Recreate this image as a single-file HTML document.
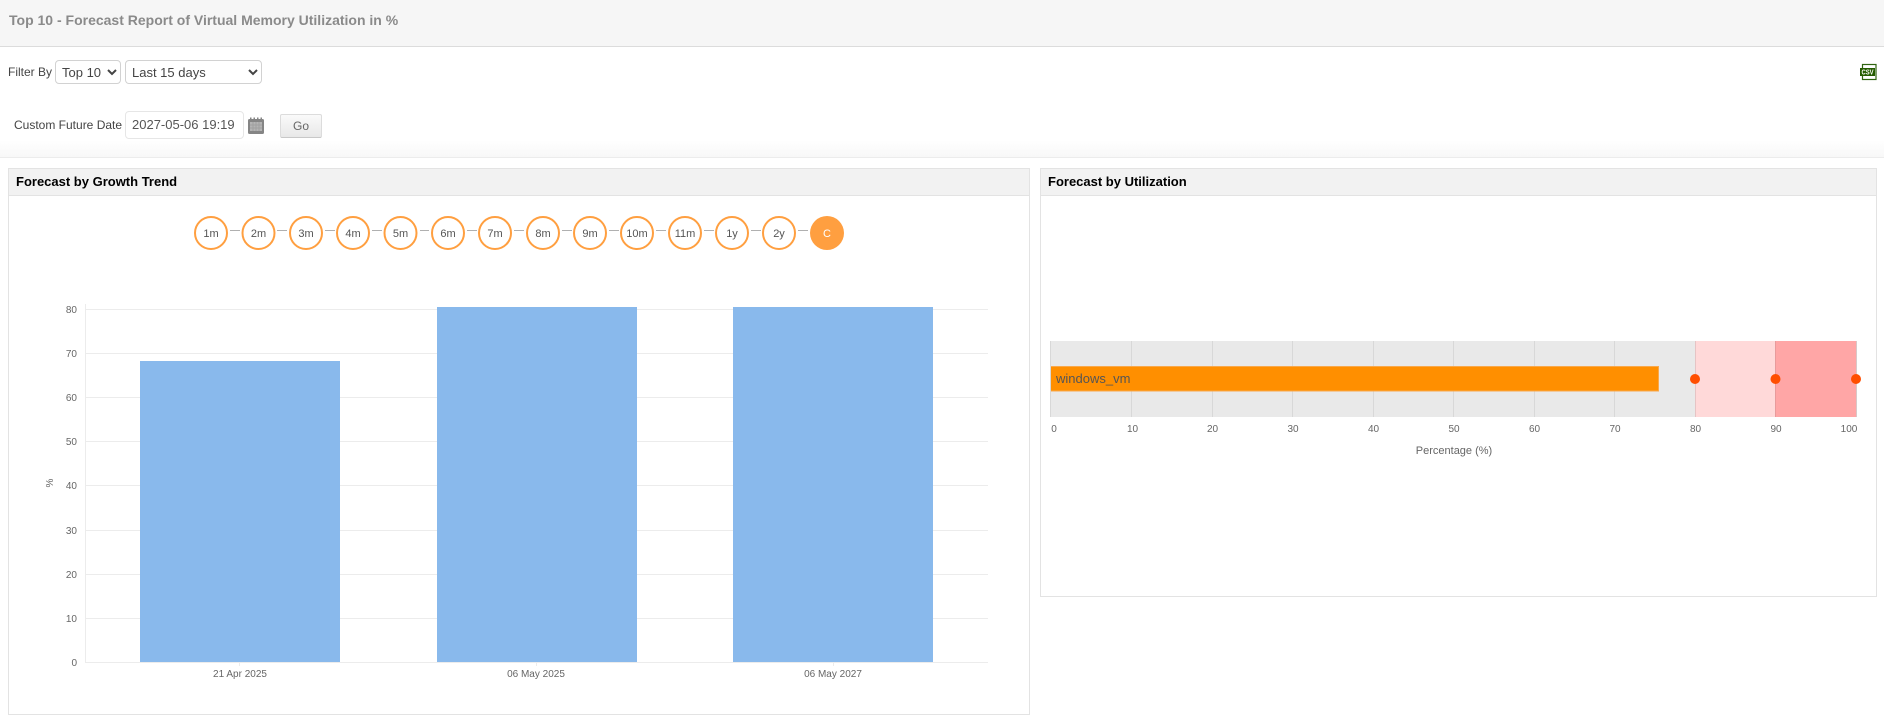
<!DOCTYPE html>
<html lang="en">
<head>
<meta charset="utf-8">
<title>Forecast Report</title>
<style>
html,body{margin:0;padding:0;background:#fff;width:1884px;height:715px;overflow:hidden;font-family:"Liberation Sans",Arial,sans-serif;color:#444}
.abs{position:absolute;white-space:nowrap}
#top{position:absolute;left:0;top:0;width:1884px;height:46px;background:#f6f6f6;border-bottom:1px solid #dcdcdc}
#title{left:9px;top:12px;font-size:14px;line-height:16px;font-weight:bold;color:#8a8a8a}
#fade{position:absolute;left:0;top:140px;width:1884px;height:17px;background:linear-gradient(#fff,#f8f8f8);border-bottom:1px solid #ececec}
select{position:absolute;box-sizing:border-box;background:#fff;border:1px solid #d2d2d2;border-radius:4px;font-family:"Liberation Sans",Arial,sans-serif;font-size:13px;color:#444;padding:0 0 0 2px;margin:0;height:24px}
#date{left:125px;top:111px;width:119px;height:28px;box-sizing:border-box;border:1px solid #e6e6e6;border-radius:4px;background:#fff;font-size:13px;line-height:26px;padding-left:6px;color:#555}
#go{left:280px;top:114px;width:42px;height:24px;box-sizing:border-box;border:1px solid #dcdcdc;border-bottom-color:#c8c8c8;border-radius:2px;background:linear-gradient(#fafafa,#e8e8e8);font-size:12px;line-height:23px;text-align:center;color:#666}
.panel{position:absolute;box-sizing:border-box;border:1px solid #e3e3e3;background:#fff}
.phead{position:absolute;left:0;top:0;right:0;height:26px;background:#f2f2f2;border-bottom:1px solid #e3e3e3;font-size:13px;font-weight:bold;line-height:25px;color:#000;padding-left:7px}
svg{position:absolute;left:0;top:0}
svg text{font-family:"Liberation Sans",Arial,sans-serif}
</style>
</head>
<body>
<div id="top"></div>
<div id="title" class="abs">Top 10 - Forecast Report of Virtual Memory Utilization in %</div>
<div id="fade"></div>

<div class="abs" style="left:8px;top:65px;font-size:12px;line-height:14px;color:#444">Filter By</div>
<select style="left:55px;top:60px;width:66px"><option>Top 10</option></select>
<select style="left:125px;top:60px;width:137px"><option>Last 15 days</option></select>

<div class="abs" style="left:14px;top:118px;font-size:12px;line-height:14px;color:#444">Custom Future Date</div>
<div id="date" class="abs">2027-05-06 19:19</div>
<svg width="1884" height="715" style="pointer-events:none;z-index:1">
  <!-- calendar -->
  <rect x="248" y="119" width="16" height="15" rx="1.5" fill="#858585"/>
  <rect x="250" y="117.5" width="1.5" height="3" fill="#858585"/>
  <rect x="253.5" y="117.5" width="1.5" height="3" fill="#858585"/>
  <rect x="257" y="117.5" width="1.5" height="3" fill="#858585"/>
  <rect x="260.5" y="117.5" width="1.5" height="3" fill="#858585"/>
  <rect x="250" y="122" width="12" height="9" fill="#b4b4b4"/>
  <path d="M253 122v9M256 122v9M259 122v9M250 125h12M250 128h12" stroke="#a0a0a0" stroke-width="1" fill="none"/>
  <!-- csv icon -->
  <rect x="1862.5" y="64.5" width="13.5" height="15" fill="#fff" stroke="#2f6410" stroke-width="1.2"/>
  <rect x="1860" y="68" width="15" height="8" fill="#255c00"/>
  <text x="1867.5" y="74.7" font-size="7" font-weight="bold" fill="#fff" text-anchor="middle" textLength="12" lengthAdjust="spacingAndGlyphs">CSV</text>
</svg>
<div id="go" class="abs">Go</div>

<div class="panel" style="left:8px;top:168px;width:1022px;height:547px"><div class="phead">Forecast by Growth Trend</div></div>
<div class="panel" style="left:1040px;top:168px;width:837px;height:429px"><div class="phead">Forecast by Utilization</div></div>

<svg width="1884" height="715" style="z-index:2">
  <!-- timeline connectors -->
  <g stroke="#b0b0b0" stroke-width="1">
    <path d="M230 230.5h10M277 230.5h10M325 230.5h10M372 230.5h10M420 230.5h9M467 230.5h10M514 230.5h10M562 230.5h10M609 230.5h10M656 230.5h10M704 230.5h10M751 230.5h10M798 230.5h10"/>
  </g>
  <g fill="#fff" stroke="#ff9f40" stroke-width="2">
    <circle cx="211" cy="233" r="16"/><circle cx="258.5" cy="233" r="16"/><circle cx="306" cy="233" r="16"/><circle cx="353" cy="233" r="16"/><circle cx="400.5" cy="233" r="16"/><circle cx="448" cy="233" r="16"/><circle cx="495" cy="233" r="16"/><circle cx="543" cy="233" r="16"/><circle cx="590" cy="233" r="16"/><circle cx="637" cy="233" r="16"/><circle cx="685" cy="233" r="16"/><circle cx="732" cy="233" r="16"/><circle cx="779" cy="233" r="16"/>
  </g>
  <circle cx="827" cy="233" r="17" fill="#ff9f40"/>
  <g font-size="11" fill="#555" text-anchor="middle">
    <text x="211" y="237">1m</text><text x="258.5" y="237">2m</text><text x="306" y="237">3m</text><text x="353" y="237">4m</text><text x="400.5" y="237">5m</text><text x="448" y="237">6m</text><text x="495" y="237">7m</text><text x="543" y="237">8m</text><text x="590" y="237">9m</text><text x="637" y="237">10m</text><text x="685" y="237">11m</text><text x="732" y="237">1y</text><text x="779" y="237">2y</text>
    <text x="827" y="237" fill="#fff">C</text>
  </g>

  <!-- bar chart grid -->
  <g stroke="#ececec" stroke-width="1">
    <path d="M85 309.5H988M85 353.5H988M85 397.5H988M85 441.5H988M85 485.5H988M85 530.5H988M85 574.5H988M85 618.5H988M85 662.5H988M85.5 304V662"/>
    <path d="M239.5 663v3M536.5 663v3M833.5 663v3"/>
  </g>
  <g fill="#89b9ec">
    <rect x="140" y="361" width="200" height="301"/>
    <rect x="437" y="307" width="200" height="355"/>
    <rect x="733" y="307" width="200" height="355"/>
  </g>
  <g font-size="10" fill="#666" text-anchor="end">
    <text x="77" y="313">80</text><text x="77" y="357">70</text><text x="77" y="401">60</text><text x="77" y="445">50</text><text x="77" y="489">40</text><text x="77" y="534">30</text><text x="77" y="578">20</text><text x="77" y="622">10</text><text x="77" y="666">0</text>
  </g>
  <text transform="translate(53 483) rotate(-90)" font-size="10" fill="#666" text-anchor="middle">%</text>
  <g font-size="10" fill="#666" text-anchor="middle">
    <text x="240" y="677">21 Apr 2025</text>
    <text x="536" y="677">06 May 2025</text>
    <text x="833" y="677">06 May 2027</text>
  </g>

  <!-- bullet chart -->
  <rect x="1050" y="341" width="645" height="76" fill="#e9e9e9"/>
  <rect x="1695" y="341" width="80.5" height="76" fill="#ffd9d9"/>
  <rect x="1775.5" y="341" width="81" height="76" fill="#ffa6a6"/>
  <g stroke="#d8d8d8" stroke-width="1">
    <path d="M1050.5 341v76M1131.5 341v76M1212.5 341v76M1292.5 341v76M1373.5 341v76M1453.5 341v76M1534.5 341v76M1614.5 341v76"/>
    <path d="M1695.5 341v76" stroke="#e6c4c4"/>
    <path d="M1775.5 341v76" stroke="#e89b9b"/>
    <path d="M1856.5 341v76" stroke="#d8c8c8"/>
  </g>
  <rect x="1051" y="366" width="608" height="25.5" fill="#ff8f00"/>
  <path d="M1051 366.5H1658.5V391H1051" fill="none" stroke="#f9a84a" stroke-width="1"/>
  <text x="1056" y="383" font-size="13" fill="#555">windows_vm</text>
  <g fill="#ff4e00">
    <circle cx="1695" cy="379" r="5"/><circle cx="1775.5" cy="379" r="5"/><circle cx="1856" cy="379" r="5"/>
  </g>
  <g font-size="10" fill="#666" text-anchor="middle">
    <text x="1054" y="432">0</text><text x="1132.5" y="432">10</text><text x="1212.5" y="432">20</text><text x="1293" y="432">30</text><text x="1373.5" y="432">40</text><text x="1454" y="432">50</text><text x="1534.5" y="432">60</text><text x="1615" y="432">70</text><text x="1695.5" y="432">80</text><text x="1776" y="432">90</text><text x="1849" y="432">100</text>
  </g>
  <text x="1454" y="454" font-size="11" fill="#666" text-anchor="middle">Percentage (%)</text>
</svg>
</body>
</html>
